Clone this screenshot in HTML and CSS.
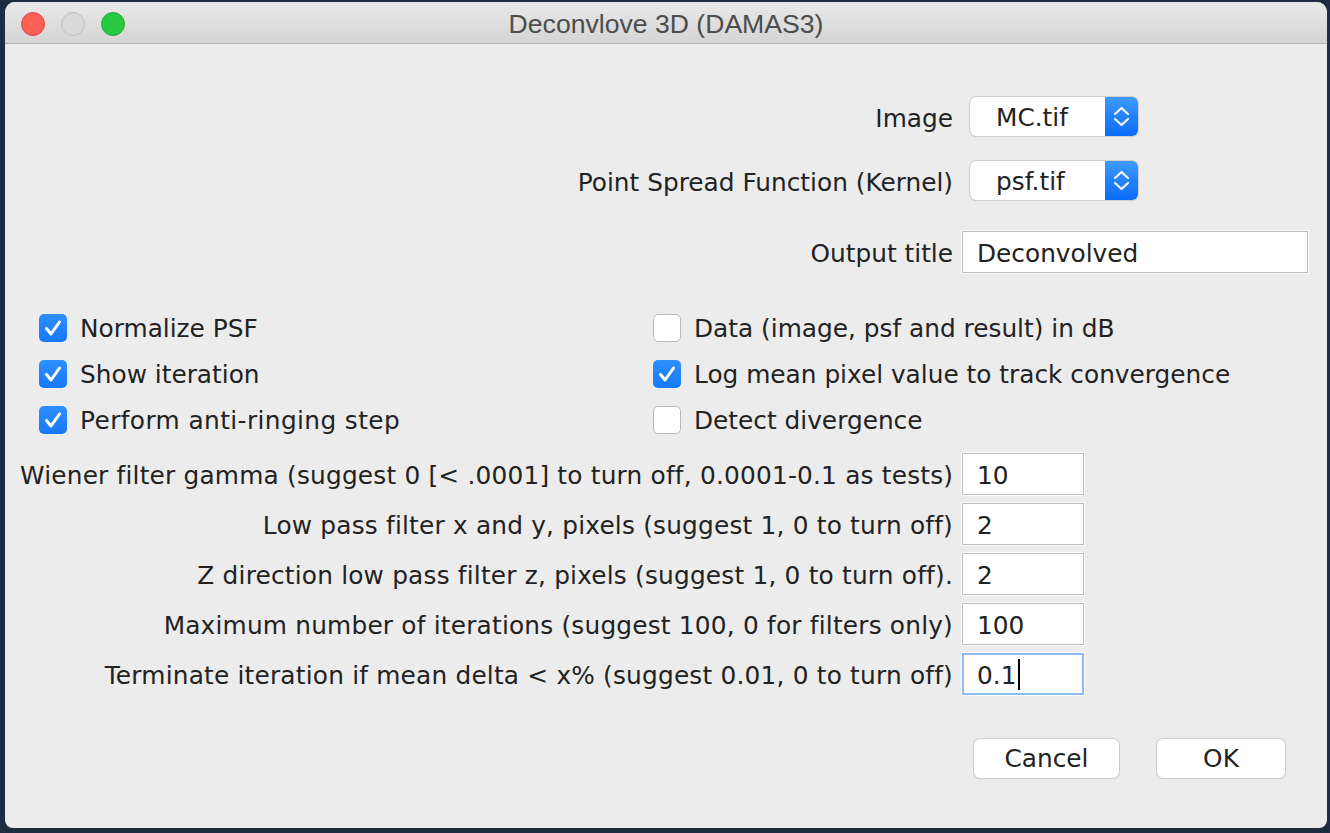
FILE: index.html
```html
<!DOCTYPE html>
<html>
<head>
<meta charset="utf-8">
<link rel="stylesheet" href="styles.css">
</head>
<body>
<div class="window">
  <div class="titlebar">
    <div class="lights">
      <span class="light red"></span>
      <span class="light gray"></span>
      <span class="light green"></span>
    </div>
    <div class="title">Deconvlove 3D (DAMAS3)</div>
    <div></div>
  </div>
  <div class="content">
    <div class="row">
      <div class="lbl">Image</div>
      <div class="select">
        <span class="select-text">MC.tif</span>
        <span class="select-arrow"><svg width="33" height="39" viewBox="0 0 33 39"><polyline points="10,17 16.5,11 23,17" /><polyline points="10,22 16.5,28 23,22" /></svg></span>
      </div>
    </div>
    <div class="row row-gap25">
      <div class="lbl">Point Spread Function (Kernel)</div>
      <div class="select">
        <span class="select-text">psf.tif</span>
        <span class="select-arrow"><svg width="33" height="39" viewBox="0 0 33 39"><polyline points="10,17 16.5,11 23,17" /><polyline points="10,22 16.5,28 23,22" /></svg></span>
      </div>
    </div>
    <div class="row row-gap31">
      <div class="lbl">Output title</div>
      <div class="field wide">Deconvolved</div>
    </div>

    <div class="checks">
      <div class="check"><span class="box on"><svg width="28" height="28" viewBox="0 0 28 28"><path d="M7.5 14.5 L12 20 L20.5 8" /></svg></span><span>Normalize PSF</span></div>
      <div class="check"><span class="box"></span><span>Data (image, psf and result) in dB</span></div>
      <div class="check"><span class="box on"><svg width="28" height="28" viewBox="0 0 28 28"><path d="M7.5 14.5 L12 20 L20.5 8" /></svg></span><span>Show iteration</span></div>
      <div class="check"><span class="box on"><svg width="28" height="28" viewBox="0 0 28 28"><path d="M7.5 14.5 L12 20 L20.5 8" /></svg></span><span>Log mean pixel value to track convergence</span></div>
      <div class="check"><span class="box on"><svg width="28" height="28" viewBox="0 0 28 28"><path d="M7.5 14.5 L12 20 L20.5 8" /></svg></span><span class="wider">Perform anti-ringing step</span></div>
      <div class="check"><span class="box"></span><span>Detect divergence</span></div>
    </div>

    <div class="nums">
      <div class="row">
        <div class="lbl">Wiener filter gamma (suggest 0 [&lt; .0001] to turn off, 0.0001-0.1 as tests)</div>
        <div class="field num">10</div>
      </div>
      <div class="row">
        <div class="lbl">Low pass filter x and y, pixels (suggest 1, 0 to turn off)</div>
        <div class="field num">2</div>
      </div>
      <div class="row">
        <div class="lbl">Z direction low pass filter z, pixels (suggest 1, 0 to turn off).</div>
        <div class="field num">2</div>
      </div>
      <div class="row">
        <div class="lbl">Maximum number of iterations (suggest 100, 0 for filters only)</div>
        <div class="field num">100</div>
      </div>
      <div class="row">
        <div class="lbl">Terminate iteration if mean delta &lt; x% (suggest 0.01, 0 to turn off)</div>
        <div class="field num focus">0.1<span class="caret"></span></div>
      </div>
    </div>

    <div class="buttons">
      <div class="btn cancel">Cancel</div>
      <div class="btn ok">OK</div>
    </div>
  </div>
</div>
</body>
</html>
```

FILE: styles.css
```css
html, body {
  margin: 0;
  height: 100%;
}

body {
  background: #1e2b40;
  padding: 2px 3px 5px 5px;
  box-sizing: border-box;
  font-family: "DejaVu Sans", "Open Sans", sans-serif;
  font-size: 24.8px;
  color: #222222;
}

.window {
  width: 1322px;
  height: 826px;
  background: #ececec;
  border-radius: 10px 10px 8px 8px;
  overflow: hidden;
  display: flex;
  flex-direction: column;
}

.titlebar {
  height: 41px;
  flex: none;
  border-bottom: 1px solid #b1b1b1;
  background: linear-gradient(#e9e9e9, #d4d4d4);
  display: grid;
  grid-template-columns: 1fr auto 1fr;
  align-items: center;
}

.lights {
  display: flex;
  gap: 16px;
  padding-left: 16px;
  margin-top: 3px;
}

.light {
  width: 24px;
  height: 24px;
  border-radius: 50%;
  box-sizing: border-box;
  border: 1px solid;
}

.light.red { background: #fe5f57; border-color: #e2463f; }
.light.gray { background: #d9d9d9; border-color: #bfbfbf; }
.light.green { background: #28c840; border-color: #1fa934; }

.title {
  font-family: "Liberation Sans", Arial, sans-serif;
  font-size: 26.6px;
  color: #4c4c4c;
  margin-top: 2px;
  line-height: 30px;
}

.content {
  padding: 53px 42px 0 15px;
}

.row {
  display: flex;
  align-items: center;
  line-height: 30px;
}

.row-gap25 { margin-top: 25px; }
.row-gap31 { margin-top: 31px; }

.lbl {
  width: 933px;
  flex: none;
  text-align: right;
  white-space: nowrap;
  padding-top: 4px;
}

.nums .lbl {
  letter-spacing: 0.2px;
}

.wider {
  letter-spacing: 0.4px;
}

.select {
  flex: none;
  margin-left: 17px;
  width: 168px;
  height: 39px;
  box-sizing: border-box;
  display: flex;
  border-radius: 6px;
  background: #ffffff;
  box-shadow: 0 0 0 1px #cfcfcf, 0 1px 1px rgba(0, 0, 0, 0.18);
  overflow: hidden;
}

.select-text {
  flex: 1;
  padding-left: 26px;
  line-height: 42px;
}

.select-arrow {
  width: 33px;
  height: 39px;
  background: linear-gradient(#3e9afd, #0a6cf6);
}

.select-arrow svg {
  display: block;
  fill: none;
  stroke: #ffffff;
  stroke-width: 2;
  stroke-linecap: round;
  stroke-linejoin: round;
}

.field {
  flex: none;
  margin-left: 9px;
  height: 42px;
  box-sizing: border-box;
  background: #ffffff;
  border: 1px solid #bdbdbd;
  outline: 1px solid #fbfbfb;
  padding-left: 14px;
  line-height: 44px;
  white-space: nowrap;
}

.field.wide { width: 346px; }
.field.num { width: 122px; }

.field.focus {
  border: 2px solid #8fbdf2;
  padding-left: 13px;
  line-height: 42px;
}

.caret {
  display: inline-block;
  width: 2px;
  height: 31px;
  background: #000000;
  margin-left: 2px;
  vertical-align: middle;
  position: relative;
  top: -3px;
}

.checks {
  display: grid;
  grid-template-columns: 614px auto;
  padding-left: 19px;
  margin-top: 32px;
}

.check {
  display: flex;
  align-items: center;
  gap: 13px;
  height: 46px;
  white-space: nowrap;
}

.box {
  width: 28px;
  height: 28px;
  box-sizing: border-box;
  border-radius: 5px;
  background: #ffffff;
  border: 1px solid #b9b9b9;
  flex: none;
}

.box.on {
  border: none;
  background: linear-gradient(#2f8ffd, #1579f8);
}

.box svg {
  display: block;
  fill: none;
  stroke: #ffffff;
  stroke-width: 3;
  stroke-linecap: round;
  stroke-linejoin: round;
}

.nums {
  margin-top: 10px;
  display: flex;
  flex-direction: column;
  gap: 8px;
}

.buttons {
  display: flex;
  justify-content: flex-end;
  gap: 38px;
  margin-top: 44px;
}

.btn {
  height: 39px;
  box-sizing: border-box;
  background: #ffffff;
  border-radius: 6px;
  box-shadow: 0 0 0 1px #cdcdcd, 0 1px 1px rgba(0, 0, 0, 0.2);
  text-align: center;
  line-height: 39px;
}

.btn.cancel { width: 145px; }
.btn.ok { width: 128px; }
```
